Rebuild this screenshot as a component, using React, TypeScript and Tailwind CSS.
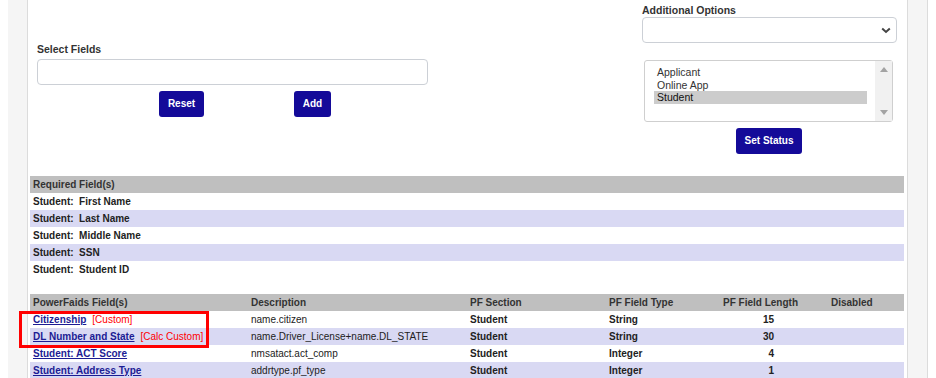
import React from "react";

const font = { fontFamily: '"Liberation Sans", Arial, sans-serif' };

const reqRows = [
  "Student:  First Name",
  "Student:  Last Name",
  "Student:  Middle Name",
  "Student:  SSN",
  "Student:  Student ID",
];

type PfRow = {
  name: string;
  tag?: string;
  desc: string;
  section: string;
  type: string;
  len: string;
};

const pfRows: PfRow[] = [
  { name: "Citizenship", tag: "[Custom]", desc: "name.citizen", section: "Student", type: "String", len: "15" },
  { name: "DL Number and State", tag: "[Calc Custom]", desc: "name.Driver_License+name.DL_STATE", section: "Student", type: "String", len: "30" },
  { name: "Student: ACT Score", desc: "nmsatact.act_comp", section: "Student", type: "Integer", len: "4" },
  { name: "Student: Address Type", desc: "addrtype.pf_type", section: "Student", type: "Integer", len: "1" },
];

function Btn({ children, w }: { children: React.ReactNode; w: string }) {
  return (
    <button
      className={`h-[26px] ${w} rounded-[3px] bg-[#140a99] text-white text-[10px] font-bold leading-none`}
      style={font}
    >
      {children}
    </button>
  );
}

export default function App() {
  return (
    <div className="w-[936px] h-[378px] overflow-hidden bg-white text-[#222]" style={font}>
      <div className="mx-[8px] h-full flex bg-[#f5f5f5] border-r border-[#dcdcdc]">
        <div className="ml-[19px] mr-[19px] flex-1 bg-white border-x border-[#dcdcdc] h-[600px]">
          {/* top section */}
          <div className="flex h-[176px]">
            <div className="ml-[9px] w-[391px] flex flex-col">
              <div className="mt-[43px] h-[12px] leading-[12px] text-[10.5px] font-bold text-[#333]">Select Fields</div>
              <div className="mt-[4px] h-[26px] w-[391px] rounded-[4px] border border-[#ccd0d6] bg-white" />
              <div className="mt-[5px] flex">
                <div className="ml-[122px]">
                  <Btn w="w-[45px]">Reset</Btn>
                </div>
                <div className="ml-[90px]">
                  <Btn w="w-[37px]">Add</Btn>
                </div>
              </div>
            </div>
            <div className="ml-[214px] w-[255px] flex flex-col">
              <div className="mt-[4px] h-[12px] leading-[12px] text-[10.5px] font-bold text-[#333]">Additional Options</div>
              <div className="mt-[1px] h-[26px] w-[255px] rounded-[4px] border border-[#ccd0d6] bg-white flex items-center justify-end pr-[5px]">
                <svg width="10" height="7" viewBox="0 0 10 7">
                  <polyline points="1.2,1.5 5,5 8.8,1.5" fill="none" stroke="#444" strokeWidth="2" />
                </svg>
              </div>
              <div className="mt-[17px] ml-[2px] h-[62px] w-[249px] rounded-[3px] border border-[#cfcfcf] bg-white flex">
                <div className="flex-1 pl-[9px] pt-[5px] text-[10.5px]">
                  <div className="h-[12.5px] leading-[12.5px] pl-[3px] text-[#333]">Applicant</div>
                  <div className="h-[12.5px] leading-[12.5px] pl-[3px] text-[#333]">Online App</div>
                  <div className="h-[13px] leading-[13px] pl-[3px] mr-[8px] bg-[#cccccc] text-[#111]">Student</div>
                </div>
                <div className="w-[17px] bg-[#f1f1f1] flex flex-col items-center justify-between py-[6px]">
                  <svg width="8" height="5" viewBox="0 0 8 5">
                    <polygon points="0,5 8,5 4,0" fill="#a3a3a3" />
                  </svg>
                  <svg width="8" height="5" viewBox="0 0 8 5">
                    <polygon points="0,0 8,0 4,5" fill="#a3a3a3" />
                  </svg>
                </div>
              </div>
              <div className="mt-[5px] ml-[94px]">
                <Btn w="w-[66px]">Set Status</Btn>
              </div>
            </div>
          </div>

          {/* required fields */}
          <div className="ml-[2px] w-[874px] text-[10px]">
            <div className="h-[17px] leading-[17px] bg-[#bfbfbf] pl-[3px] font-bold text-[#333]">Required Field(s)</div>
            {reqRows.map((r, i) => (
              <div
                key={i}
                className={`h-[17px] leading-[17px] pl-[3px] font-bold text-[#222] whitespace-pre ${i % 2 === 1 ? "bg-[#d9d9f3]" : "bg-white"}`}
              >
                {r}
              </div>
            ))}
          </div>

          {/* powerfaids fields */}
          <div className="relative mt-[16px] ml-[2px] w-[874px] text-[10px]">
            <div className="grid grid-cols-[218px_219px_139px_114px_108px_76px] h-[17px] leading-[17px] bg-[#bfbfbf] font-bold text-[#333]">
              <div className="pl-[3px]">PowerFaids Field(s)</div>
              <div className="pl-[3px]">Description</div>
              <div className="pl-[3px]">PF Section</div>
              <div className="pl-[3px]">PF Field Type</div>
              <div className="pl-[3px]">PF Field Length</div>
              <div className="pl-[3px]">Disabled</div>
            </div>
            {pfRows.map((r, i) => (
              <div
                key={i}
                className={`grid grid-cols-[218px_219px_139px_114px_108px_76px] h-[17px] leading-[17px] ${i % 2 === 1 ? "bg-[#d9d9f3]" : "bg-white"}`}
              >
                <div className="pl-[3px] whitespace-nowrap">
                  <a href="#" className="font-bold text-[#1c1c94] underline">{r.name}</a>
                  {r.tag && <span className="ml-[6px] text-[#ff0000]">{r.tag}</span>}
                </div>
                <div className="pl-[3px] text-[#222]">{r.desc}</div>
                <div className="pl-[3px] font-bold text-[#222]">{r.section}</div>
                <div className="pl-[3px] font-bold text-[#222]">{r.type}</div>
                <div className="pr-[54px] text-right font-bold text-[#222]">{r.len}</div>
                <div />
              </div>
            ))}
            <div className="absolute left-[-11px] top-[17px] w-[190px] h-[37px] border-[3px] border-[#ff0000]" />
          </div>
        </div>
      </div>
    </div>
  );
}
